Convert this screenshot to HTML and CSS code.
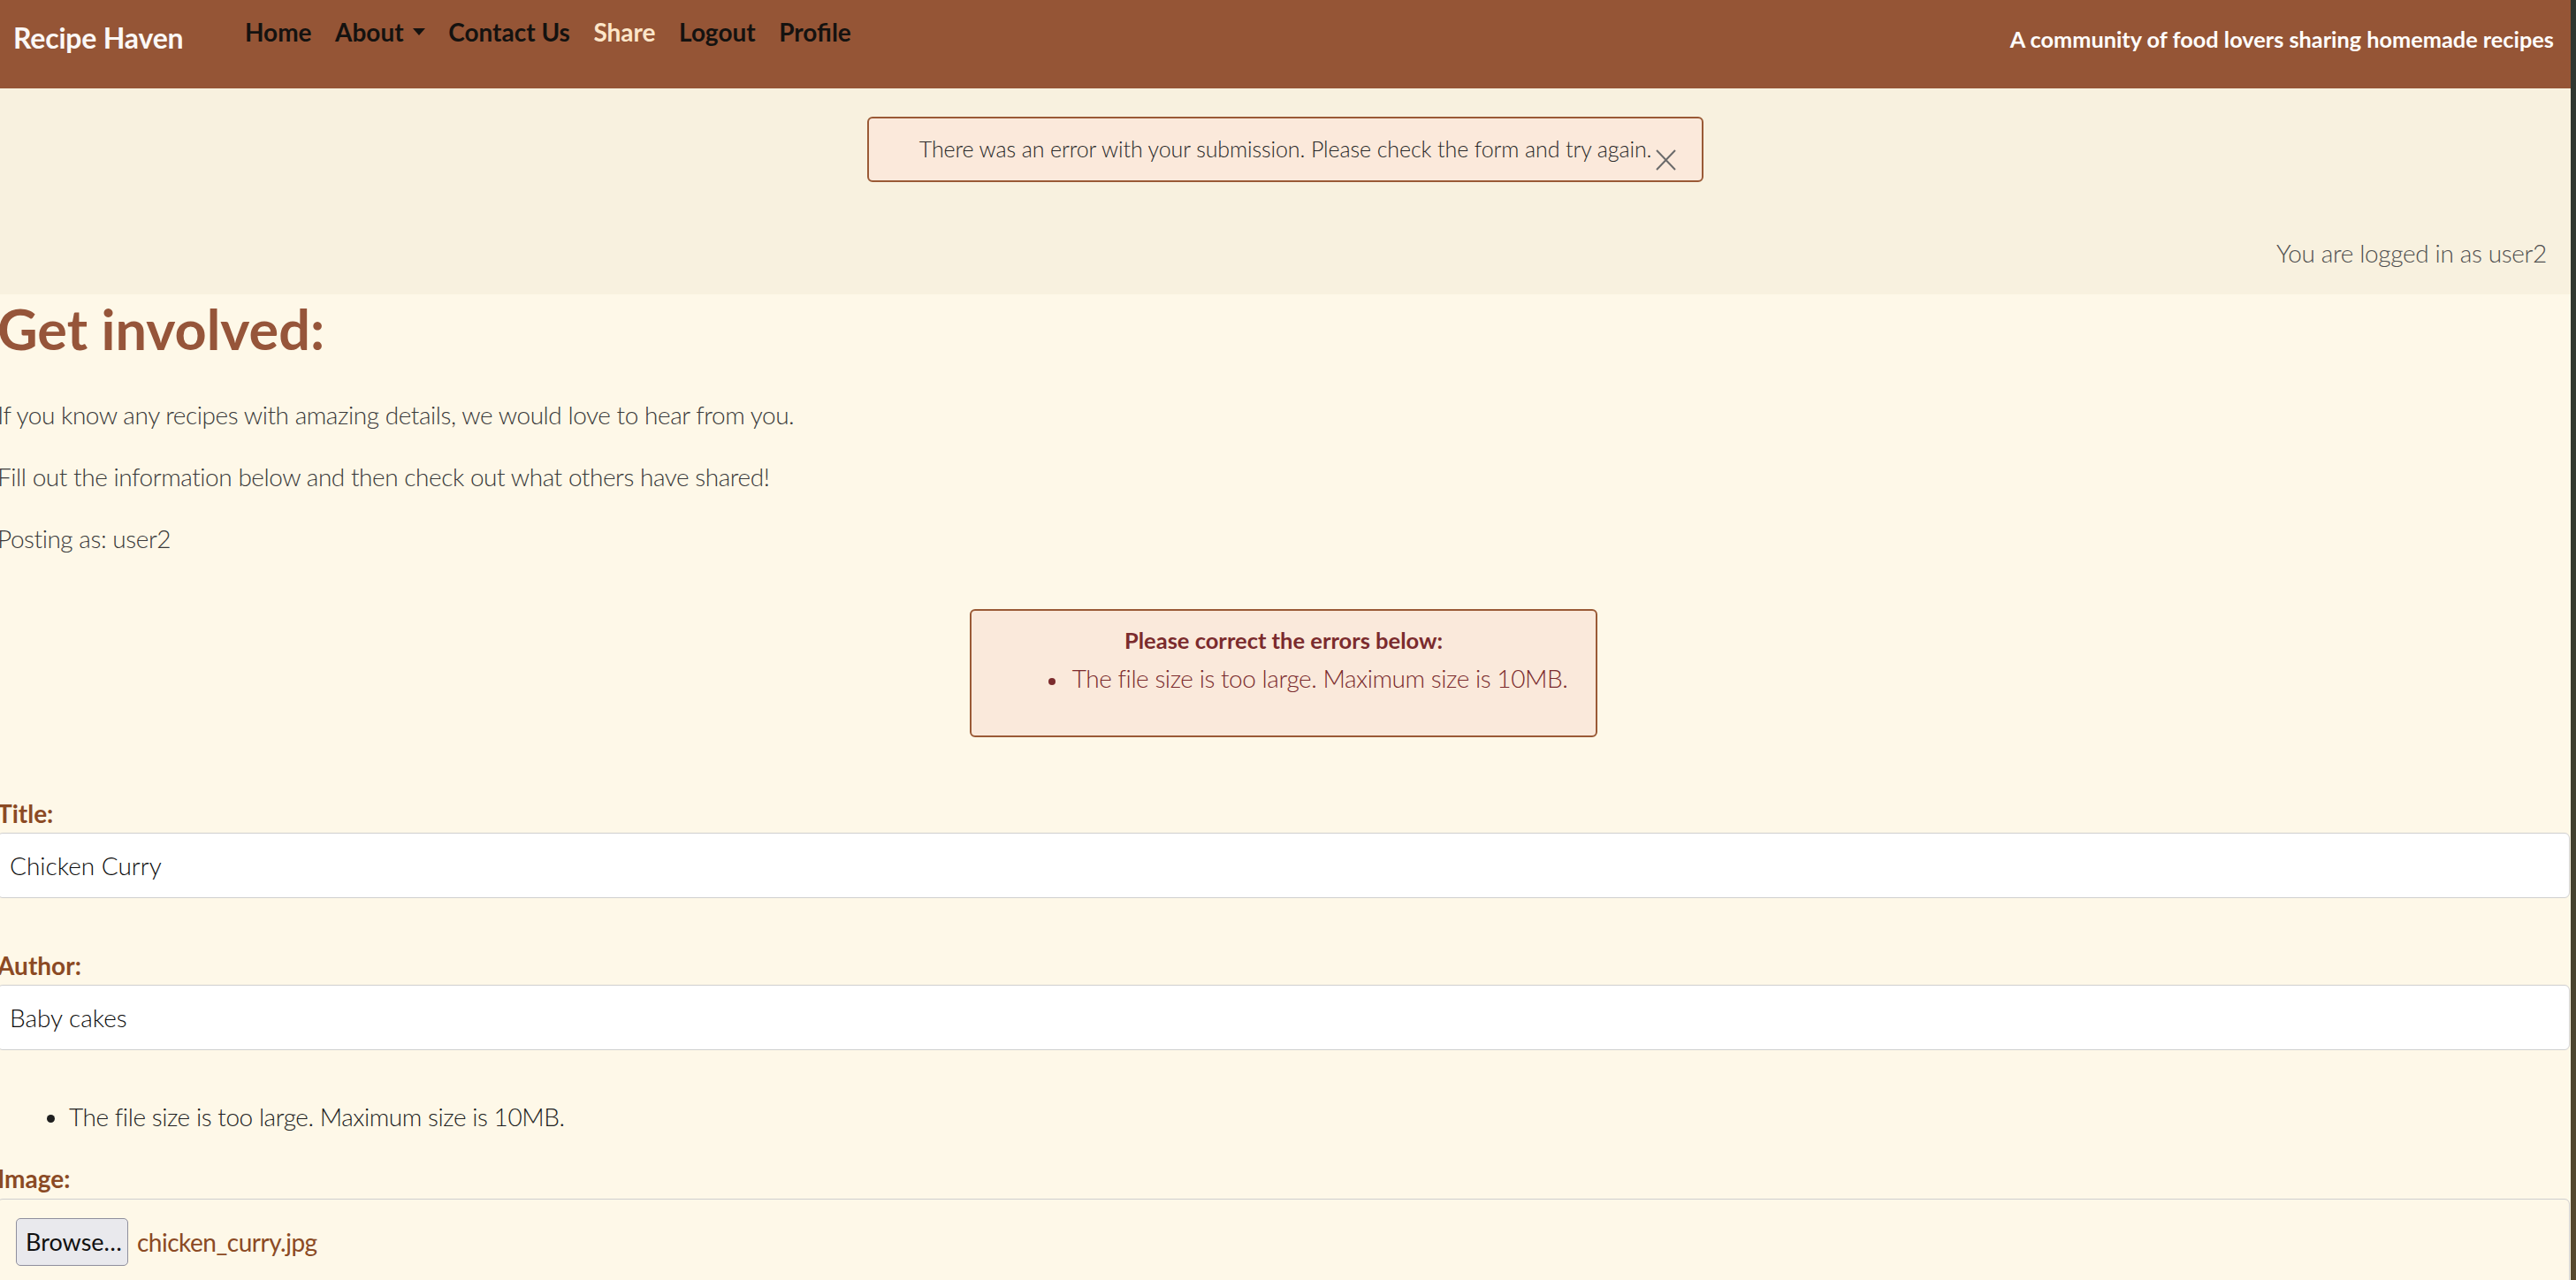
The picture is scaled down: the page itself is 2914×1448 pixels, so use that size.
FILE: index.html
```html
<!DOCTYPE html>
<html lang="en">
<head>
<meta charset="utf-8">
<title>Recipe Haven - Share</title>
<link rel="stylesheet" href="styles.css">
</head>
<body>
<div class="page">
  <nav class="navbar">
    <a class="brand" href="#">Recipe Haven</a>
    <ul class="nav">
      <li><a href="#">Home</a></li>
      <li><a href="#" class="dropdown">About</a></li>
      <li><a href="#">Contact Us</a></li>
      <li><a href="#" class="active">Share</a></li>
      <li><a href="#">Logout</a></li>
      <li><a href="#">Profile</a></li>
    </ul>
    <span class="tagline">A community of food lovers sharing homemade recipes</span>
  </nav>

  <div class="band">
    <div class="alert">
      There was an error with your submission. Please check the form and try again.
      <span class="close" aria-label="Close">
        <svg viewBox="0 0 25 24" width="25" height="24"><path d="M2 1 L23 23 M23 1 L2 23" stroke="#6b6b6b" stroke-width="2" fill="none"/></svg>
      </span>
    </div>
    <p class="logged">You are logged in as user2</p>
  </div>

  <main class="content">
    <h1>Get involved:</h1>
    <p>If you know any recipes with amazing details, we would love to hear from you.</p>
    <p>Fill out the information below and then check out what others have shared!</p>
    <p>Posting as: user2</p>

    <div class="errors">
      <strong>Please correct the errors below:</strong>
      <ul>
        <li>The file size is too large. Maximum size is 10MB.</li>
      </ul>
    </div>

    <form class="form">
      <label for="title">Title:</label>
      <input id="title" class="field" type="text" value="Chicken Curry">

      <label for="author" class="gap">Author:</label>
      <input id="author" class="field" type="text" value="Baby cakes">

      <ul class="field-errors">
        <li>The file size is too large. Maximum size is 10MB.</li>
      </ul>

      <label>Image:</label>
      <div class="file">
        <span class="browse">Browse…</span>
        <span class="filename">chicken_curry.jpg</span>
      </div>
    </form>
  </main>
</div>
</body>
</html>
```

FILE: styles.css
```css
html {
  background: linear-gradient(180deg, #2f3631 0%, #343a30 40%, #4a4430 75%, #5a4a2e 100%);
}
body {
  margin: 0;
  font-family: "Lato", "Open Sans", sans-serif;
  font-size: 28px;
  line-height: 1.5;
  color: #333;
}
.page {
  width: calc(100% - 6px);
  min-height: 100vh;
  background: #fef8e8;
  overflow: hidden;
}

/* Navbar */
.navbar {
  height: 100px;
  background: #955536;
  display: flex;
  align-items: flex-start;
  box-sizing: border-box;
}
.brand {
  font-weight: 700;
  font-size: 32px;
  line-height: 1.2;
  letter-spacing: -0.2px;
  color: #fbf8f6;
  text-decoration: none;
  padding: 24px 0 0 15px;
}
.nav {
  list-style: none;
  display: flex;
  margin: 0 0 0 56.25px;
  padding: 20px 0 0 0;
}
.nav a {
  display: block;
  font-weight: 700;
  font-size: 28px;
  line-height: 1.2;
  color: #141210;
  text-decoration: none;
  padding: 0 13.25px;
}
.nav a.active {
  color: #fde6c9;
}
.dropdown::after {
  content: "";
  display: inline-block;
  margin-left: 10px;
  vertical-align: 7px;
  border-top: 8px solid #141210;
  border-left: 7.5px solid transparent;
  border-right: 7.5px solid transparent;
}
.tagline {
  margin-left: auto;
  padding: 29px 19px 0 0;
  font-weight: 700;
  font-size: 25.3px;
  line-height: 1.2;
  color: #fffdfb;
}

/* Top band with alert */
.band {
  background: #f8f1df;
  padding: 32px 27px 26px 27px;
}
.alert {
  position: relative;
  width: 942px;
  margin: 0 auto;
  box-sizing: content-box;
  background: #fbe9db;
  border: 2px solid #9a5a36;
  border-radius: 6px;
  padding: 16.25px 0;
  text-align: center;
  font-size: 25px;
  line-height: 1.5;
  letter-spacing: -0.1px;
  font-weight: 300;
  color: #2a2a2a;
}
.close {
  position: absolute;
  right: 28px;
  top: 35px;
  width: 25px;
  height: 24px;
  line-height: 0;
}
.logged {
  margin: 59px 0 0 0;
  text-align: right;
  font-weight: 300;
  letter-spacing: -0.35px;
  color: #505050;
}

/* Main content */
.content {
  margin-left: -3px;
  width: calc(100% + 2px);
}
.content h1 {
  margin: 0 0 37px 0;
  font-size: 63px;
  line-height: 78px;
  font-weight: 700;
  color: #96553a;
}
.content p {
  margin: 0 0 28px 0;
  font-weight: 300;
  letter-spacing: -0.45px;
  color: #3a3a3a;
}

.errors {
  width: 706px;
  margin: 59px auto 65px auto;
  background: #fae9db;
  border: 2px solid #9a5a36;
  border-radius: 6px;
  padding: 12px 0 16px 0;
  text-align: center;
  color: #7b2b2d;
}
.errors strong {
  display: block;
  font-weight: 700;
  font-size: 25.5px;
  line-height: 43px;
}
.errors ul {
  margin: 0 0 28px 0;
  padding: 0 0 0 55px;
  list-style: none;
  font-weight: 300;
  letter-spacing: -0.45px;
}
.errors li::before {
  content: "";
  display: inline-block;
  width: 8px;
  height: 8px;
  border-radius: 50%;
  background: currentColor;
  margin-right: 19px;
  vertical-align: 3px;
}

/* Form */
.form label {
  display: block;
  font-weight: 700;
  color: #8b4a24;
}
.form label.gap {
  margin-top: 55px;
}
.field {
  display: block;
  width: 100%;
  box-sizing: border-box;
  margin: 1px 0 0 0;
  padding: 15px 13px;
  font-family: "Lato", "Open Sans", sans-serif;
  font-size: 28px;
  line-height: 42px;
  font-weight: 300;
  color: #0d0d0d;
  background: #ffffff;
  border: 1px solid #cfcfcf;
  border-radius: 6px;
}
.field-errors {
  margin: 54px 0 28px 0;
  padding: 0 0 0 81px;
  color: #1f1f1f;
  font-weight: 300;
  letter-spacing: -0.45px;
}
.file {
  margin-top: 2px;
  border: 1px solid #cfcfcf;
  border-radius: 6px;
  padding: 21px 20px 70px 20px;
  display: flex;
  align-items: center;
}
.browse {
  display: inline-block;
  box-sizing: border-box;
  height: 54px;
  width: 127px;
  padding: 0 0 0 10px;
  background: #e9e9ed;
  border: 1px solid #8f8f9d;
  border-radius: 5px;
  font-size: 27px;
  line-height: 52px;
  color: #111;
  white-space: nowrap;
}
.filename {
  margin-left: 10px;
  color: #8b4a24;
  font-weight: 400;
  letter-spacing: -0.5px;
}
```
